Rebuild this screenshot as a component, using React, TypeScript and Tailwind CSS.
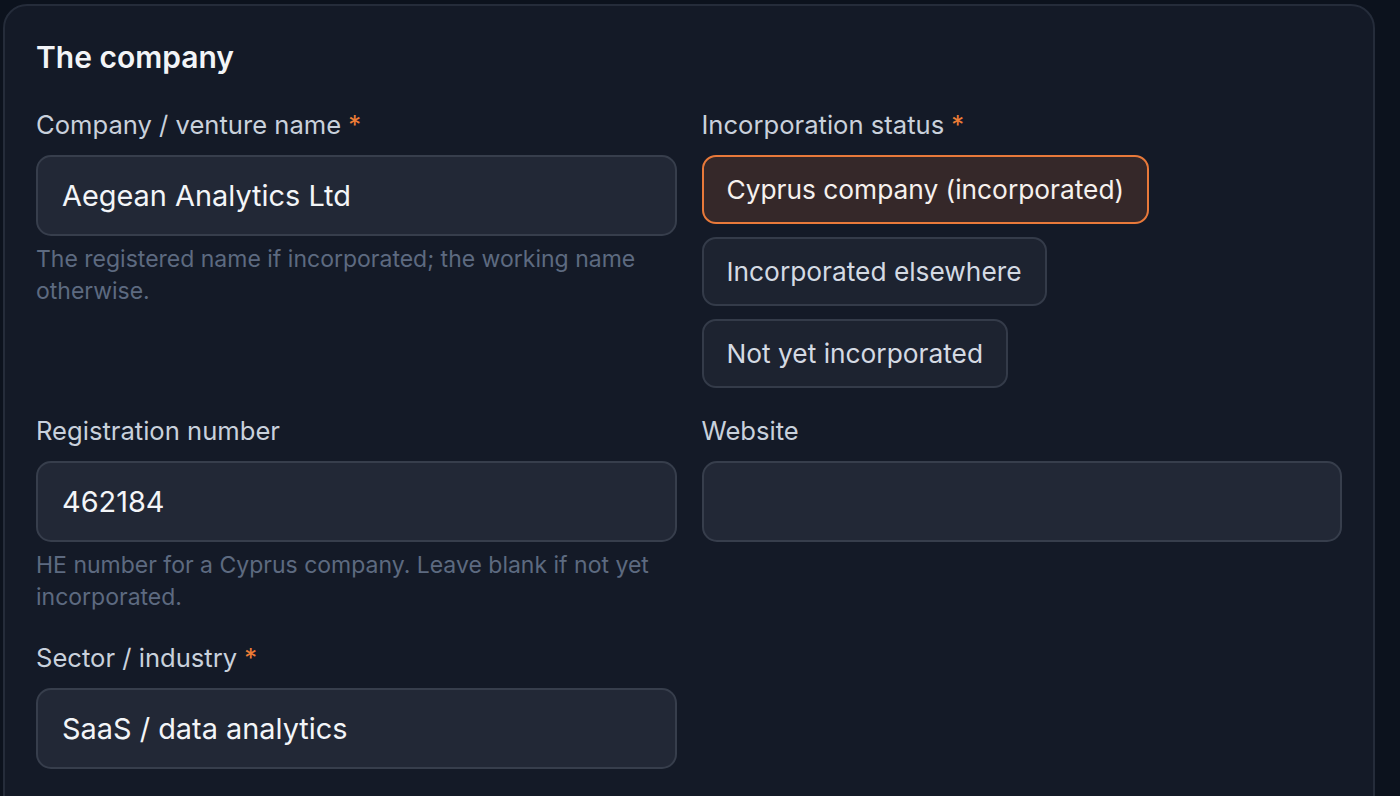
import React from "react";

const Req = () => <span className="text-[#ee7d36]"> *</span>;

function Label({ children, req }: { children: React.ReactNode; req?: boolean }) {
  return (
    <div className="text-[25.6px] leading-[36px] text-[#c9d1dc] mb-[12px]">
      {children}
      {req && <Req />}
    </div>
  );
}

function Input({ value }: { value: string }) {
  return (
    <div className="h-[81px] rounded-[15px] border-2 border-[#373e4c] bg-[#222836] px-[24px] flex items-center text-[28.9px] text-[#f3f5f8]">
      {value}
    </div>
  );
}

function Help({ children }: { children: React.ReactNode }) {
  return <div className="mt-[7px] text-[23px] leading-[32px] text-[#5d6a80]">{children}</div>;
}

function Choice({ label, active }: { label: string; active?: boolean }) {
  return (
    <div
      className={
        "self-start h-[69px] rounded-[14px] border-2 px-[23px] flex items-center text-[26.3px] " +
        (active
          ? "border-[#e8793a] bg-[#352829] text-[#f6f1ee]"
          : "border-[#343b49] bg-[#1d2330] text-[#d4dae3]")
      }
    >
      {label}
    </div>
  );
}

export default function App() {
  return (
    <div
      className="min-h-[796px] bg-[#0c121d] pl-[3px] pt-[4px] pr-[25px] overflow-hidden"
      style={{ fontFamily: "Inter, 'Noto Sans', sans-serif" }}
    >
      <div className="rounded-[24px] border-2 border-[#252c3a] bg-[#141a27] px-[31px] pt-[31px] pb-[40px] min-h-[820px]">
        <h2 className="text-[30px] leading-[40px] font-semibold text-[#f2f4f7]">The company</h2>
        <div className="mt-[30px] grid grid-cols-2 gap-x-[25px]">
          <div>
            <Label req>Company / venture name</Label>
            <Input value="Aegean Analytics Ltd" />
            <Help>The registered name if incorporated; the working name otherwise.</Help>
          </div>
          <div>
            <Label req>Incorporation status</Label>
            <div className="flex flex-col gap-[13px]">
              <Choice label="Cyprus company (incorporated)" active />
              <Choice label="Incorporated elsewhere" />
              <Choice label="Not yet incorporated" />
            </div>
          </div>
          <div className="mt-[25px]">
            <Label>Registration number</Label>
            <Input value="462184" />
            <Help>HE number for a Cyprus company. Leave blank if not yet incorporated.</Help>
          </div>
          <div className="mt-[25px]">
            <Label>Website</Label>
            <Input value="" />
          </div>
          <div className="mt-[27px]">
            <Label req>Sector / industry</Label>
            <Input value="SaaS / data analytics" />
          </div>
        </div>
      </div>
    </div>
  );
}
